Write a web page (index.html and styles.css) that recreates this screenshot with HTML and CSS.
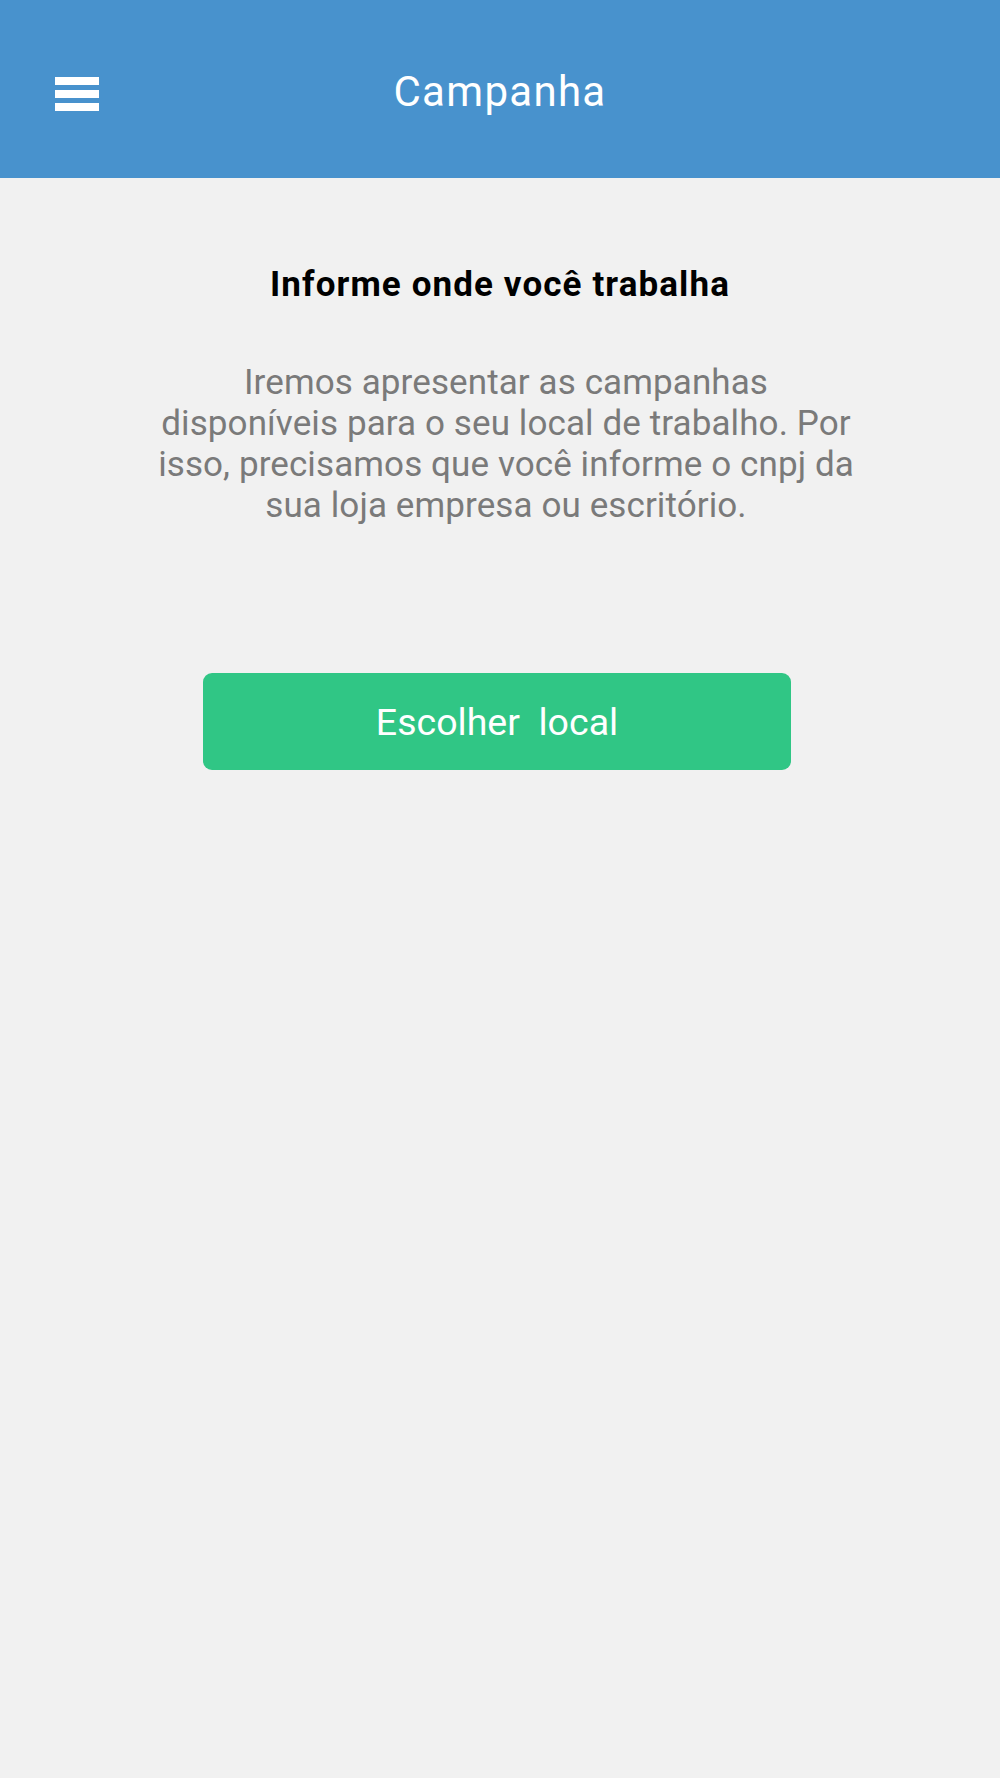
FILE: index.html
```
<!DOCTYPE html>
<html lang="pt">
<head>
<meta charset="utf-8">
<title>Campanha</title>
<link rel="stylesheet" href="styles.css">
</head>
<body>
<header class="topbar">
  <div class="menu-cell">
    <div class="hamburger" aria-label="Menu">
      <span class="bar"></span>
      <span class="bar"></span>
      <span class="bar"></span>
    </div>
  </div>
  <h1 class="title">Campanha</h1>
  <div class="spacer"></div>
</header>
<main class="content">
  <h2 class="heading">Informe onde você trabalha</h2>
  <p class="lead">Iremos apresentar as campanhas<br>disponíveis para o seu local de trabalho. Por<br>isso, precisamos que você informe o cnpj da<br>sua loja empresa ou escritório.</p>
  <button class="cta" type="button">Escolher&nbsp; local</button>
</main>
</body>
</html>
```
FILE: styles.css
```
html, body {
  margin: 0;
  padding: 0;
}
body {
  background: #f1f1f1;
  font-family: Roboto, "Noto Sans", Arial, sans-serif;
  min-height: 1778px;
}
.topbar {
  height: 178px;
  background: #4892cd;
  display: grid;
  grid-template-columns: 1fr auto 1fr;
  align-items: center;
}
.menu-cell {
  padding-left: 55px;
  padding-top: 10px;
}
.hamburger {
  display: flex;
  flex-direction: column;
  gap: 5px;
  width: 44px;
}
.bar {
  display: block;
  height: 8px;
  background: #ffffff;
}
.title {
  margin: 0;
  padding-top: 4px;
  color: #ffffff;
  font-weight: 400;
  font-size: 42px;
  letter-spacing: 1.3px;
  line-height: 47px;
}
.content {
  display: flex;
  flex-direction: column;
  align-items: center;
}
.heading {
  margin: 87px 0 0;
  font-size: 35px;
  letter-spacing: 1.1px;
  line-height: 40px;
  font-weight: 700;
  color: #000;
}
.lead {
  margin: 57px 0 0;
  padding-left: 12px;
  font-size: 35px;
  letter-spacing: 0.1px;
  line-height: 41px;
  color: #7a7a7a;
  text-align: center;
  white-space: nowrap;
}
.cta {
  margin-top: 147px;
  margin-right: 6px;
  width: 588px;
  height: 97px;
  border: none;
  border-radius: 9px;
  background: #30c685;
  color: #ffffff;
  font-family: Roboto, "Noto Sans", Arial, sans-serif;
  font-size: 37.5px;
  font-weight: 400;
  padding: 0;
}
```
